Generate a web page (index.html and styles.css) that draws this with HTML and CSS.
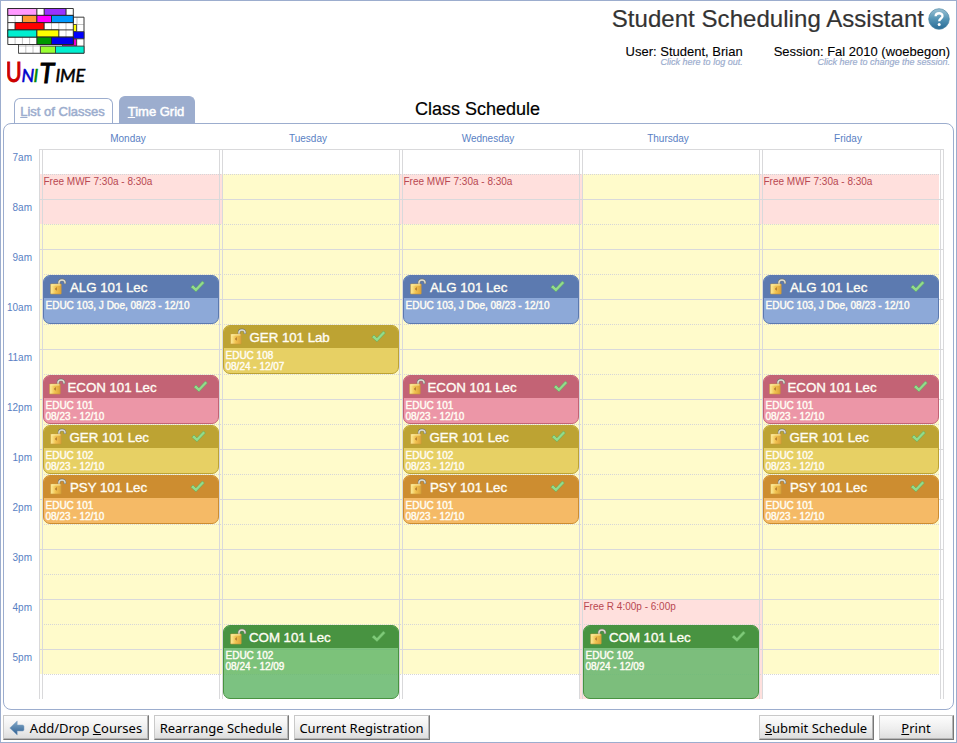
FILE: index.html
```html
<!DOCTYPE html>
<html lang="en">
<head>
<meta charset="utf-8">
<title>Student Scheduling Assistant</title>
<link rel="stylesheet" href="styles.css">
</head>
<body>
<svg width="0" height="0" class="defs" aria-hidden="true">
  <defs>
    <linearGradient id="gold" x1="0" x2="1" y1="0" y2="0"><stop offset="0" stop-color="#fff0a0"/><stop offset=".45" stop-color="#f2c452"/><stop offset="1" stop-color="#dda33a"/></linearGradient>
    <linearGradient id="blue" x1="0" x2="0" y1="0" y2="1"><stop offset="0" stop-color="#9cc3d5"/><stop offset=".5" stop-color="#5494b5"/><stop offset="1" stop-color="#286b96"/></linearGradient>
    <linearGradient id="arrowfill" x1="0" x2="0" y1="0" y2="1"><stop offset="0" stop-color="#84abc9"/><stop offset="1" stop-color="#2d5e91"/></linearGradient>
    <symbol id="lock" viewBox="0 0 17 17"><path d="M9 7V4.6C9 0.8 15 0.8 15 4.5V6" fill="none" stroke="#77786c" stroke-width="2.5"/><path d="M9 7V4.6C9 1 15 1 15 4.5V5.6" fill="none" stroke="#ddddd2" stroke-width="1.5"/><rect x=".6" y="6" width="10.6" height="10" rx=".6" fill="url(#gold)" stroke="#c9983a" stroke-width=".6"/><path d="M1.4 6.9h9" stroke="#fff2a8"/><path d="M6.8 9v3.8L4.8 11z" fill="#ae7430"/></symbol>
    <symbol id="check" viewBox="0 0 15 13"><path d="M.8 7.2L3 5L5.9 7.9L12.4 1L14.4 3L6 11.8z" fill="#92dc8b" stroke="#5ba65a" stroke-width=".5"/></symbol>
  </defs>
</svg>
<div class="page">
  <header class="header">
    <svg class="logo" width="80" height="80" viewBox="7 7 80 80">
      <g stroke="#aaa" stroke-width=".7" fill="#fff">
        <path d="M18.5 17.2H84V53.3H18.5z"/><path d="M25.8 17v36M33 17v36M77 17v36M40 45v8M18 24.5h66M18 32h66M18 39h66M18 46h66" fill="none"/>
      </g>
      <g stroke="#333" stroke-width=".8">
        <path d="M18.5 17.2H84V53.3H18.5z" fill="none"/>
        <path d="M70 24.5h6.5v7H70z" fill="#ff0"/><path d="M73 31.7h11v7H73z" fill="#00f"/><path d="M62.5 39h14v7h-14z" fill="#e0c"/><path d="M40.5 46.2h15v7h-15z" fill="#9f3"/><path d="M55.5 46.2H84v7H55.5z" fill="#00efd0"/>
      </g>
      <path d="M7.8 8.5h65.5v36H7.8z" fill="#fff"/>
      <path d="M15.1 8.5v36M22.4 8.5v36M29.6 8.5v36M36.9 8.5v36M44.2 8.5v36M51.5 8.5v36M58.8 8.5v36M66 8.5v36" stroke="#aaa" stroke-width=".7"/>
      <g stroke="#222" stroke-width=".9">
        <path d="M7.8 8.5h65.5v36H7.8z" fill="none"/><path d="M7.8 15.4h65.5M7.8 22.6h65.5M7.8 29.9h65.5M7.8 37.1h65.5"/>
        <path d="M7.8 8.5h29v6.9h-29z" fill="#f9f"/><path d="M44.2 8.5h21.8v6.9H44.2z" fill="#93f"/>
        <path d="M22.4 15.4h14.5v7.2H22.4z" fill="#f93"/><path d="M36.9 15.4h14.6v7.2H36.9z" fill="#f0f"/><path d="M51.5 15.4h21.8v7.2H51.5z" fill="#09f"/>
        <path d="M15.1 22.6h29v7.3h-29z" fill="#f00"/><path d="M7.8 29.9h29.1v7.2H7.8z" fill="#00efd0"/><path d="M36.9 29.9h21.9v7.2H36.9z" fill="#ff0"/>
        <path d="M36.9 37.1h14.6v7.4H36.9z" fill="#090"/><path d="M51.5 37.1h21.8v7.4H51.5z" fill="#00e"/>
      </g>
      <text class="word" y="82.8"><tspan class="big" x="5.8" y="82.3" fill="#c00" stroke="#c00" textLength="16" lengthAdjust="spacingAndGlyphs">U</tspan><tspan x="21.5" fill="#00c" stroke="#00c">N</tspan><tspan x="33.5" fill="#080" stroke="#080">I</tspan><tspan class="big tee" x="39.5" y="82.5">T</tspan><tspan x="55.5" y="82">I</tspan><tspan x="60" y="82">M</tspan><tspan x="75.5" y="81.5">E</tspan></text>
    </svg>
    <div class="heading">
      <div class="title">Student Scheduling Assistant
        <svg width="22" height="22" viewBox="0 0 22 22"><circle cx="11" cy="11" r="10.3" fill="url(#blue)" stroke="#4d87a5" stroke-width=".7"/><path d="M7.6 8.3C7.8 4.2 14.6 4.3 14.5 8.2C14.4 10.4 11.2 10.7 11.2 13.3" fill="none" stroke="#fff" stroke-width="2.3"/><circle cx="11.2" cy="16.4" r="1.5" fill="#fff"/></svg>
      </div>
      <div class="infos">
        <div class="info">User: Student, Brian<span class="hint">Click here to log out.</span></div>
        <div class="info">Session: Fal 2010 (woebegon)<span class="hint">Click here to change the session.</span></div>
      </div>
    </div>
  </header>
  <nav class="tabs">
    <div class="tab"><u>L</u>ist of Classes</div>
    <div class="tab active"><u>T</u>ime Grid</div>
    <div class="caption">Class Schedule</div>
  </nav>
  <main class="panel">
    <div class="days"><span>Monday</span><span>Tuesday</span><span>Wednesday</span><span>Thursday</span><span>Friday</span></div>
    <div class="body">
      <div class="hours"><span>7am</span><span>8am</span><span>9am</span><span>10am</span><span>11am</span><span>12pm</span><span>1pm</span><span>2pm</span><span>3pm</span><span>4pm</span><span>5pm</span></div>
      <div class="timegrid">
        <div class="layer available"></div>
        <div class="layer week" id="free"></div>
        <div class="layer lines" id="lines"></div>
        <div class="layer verticals"></div>
        <div class="layer week" id="week"></div>
      </div>
    </div>
  </main>
  <footer class="buttons">
    <button class="b-add"><svg width="16" height="16" viewBox="0 0 16 16"><path d="M.8 8L8.2 1V5H13.5Q15 5 15 6.5V9.5Q15 11 13.5 11H8.2V15z" fill="url(#arrowfill)" stroke="#7d9fc0" stroke-width=".5"/></svg><span>Add/Drop <u>C</u>ourses</span></button>
    <button class="b-re">Rearrange Schedule</button>
    <button class="b-cur">Current Registration</button>
    <button class="b-sub"><span><u>S</u>ubmit Schedule</span></button>
    <button class="b-print"><span><u>P</u>rint</span></button>
  </footer>
</div>
<script src="grid.js"></script>
</body>
</html>
```
FILE: styles.css
```css
* { box-sizing: border-box; }
body { margin: 0; background: #fff; font-family: "Liberation Sans", Arial, sans-serif; color: #000; }
.defs { display: block; height: 0; }
.page { width: 957px; height: 743px; border: 1px solid #9cadce; display: flex; flex-direction: column; overflow: hidden; }
.header { height: 95px; display: flex; justify-content: space-between; padding: 6px 6px 0; flex: none; }
.word { font-family: Lato, sans-serif; font-style: italic; font-size: 18px; font-weight: 400; stroke: #000; stroke-width: .5px; }
.word .big { font-size: 26px; font-style: normal; stroke-width: 1px; }
.word .tee { font-style: italic; font-size: 27px; }
.heading { display: flex; flex-direction: column; align-items: flex-end; }
.title { display: flex; align-items: center; gap: 4px; font-size: 24px; line-height: 24px; height: 24px; color: #333; white-space: nowrap; letter-spacing: .05px; -webkit-text-stroke: .2px #333; }
.infos { display: flex; gap: 31px; margin-top: 13px; }
.info { font-size: 13px; line-height: 15px; text-align: right; -webkit-text-stroke: .1px #000; }
.hint { display: block; font-size: 9px; line-height: 6px; font-style: italic; color: #9cadce; -webkit-text-stroke: .2px #9cadce; }
.tabs { height: 27px; display: flex; align-items: flex-end; padding-left: 13px; flex: none; }
.tab { height: 25px; width: 99px; border: 1px solid #9cadce; border-bottom: 0; border-radius: 6px 6px 0 0; color: #9cadce; font-size: 13px; line-height: 26px; text-align: center; margin-right: 6px; padding-right: 2px; white-space: nowrap; -webkit-text-stroke: .5px currentColor; }
.tab.active { height: 27px; width: 76px; background: #9cadce; color: #fff; line-height: 30px; }
.caption { font-size: 18px; line-height: 20px; margin: 0 0 4px 214px; -webkit-text-stroke: .2px #000; }
.panel { height: 587px; margin: 0 2px; border: 1px solid #9cadce; border-radius: 8px; flex: none; }
.days { height: 25px; display: grid; grid-template-columns: repeat(5, 180px); padding-left: 34px; font-size: 10px; line-height: 29px; text-align: center; color: #5a7fc4; }
.body { display: flex; height: 550px; }
.hours { width: 35px; display: flex; flex-direction: column; font-size: 10px; color: #5a7fc4; text-align: right; padding-right: 7px; flex: none; }
.hours span { height: 50px; line-height: 17px; }
.timegrid { width: 905px; height: 550px; display: grid; }
.layer { grid-area: 1 / 1; }
.available { background: #fffbcb; margin: 25px 5px 25px 1px; }
.week { display: grid; grid-template-columns: repeat(5, 180px); padding-left: 3px; }
.day { display: grid; grid-template-rows: repeat(22, 25px); grid-template-columns: 176px; padding-left: 1px; }
.free { grid-column: 1; background: #ffe0dd; color: #b84851; font-size: 10px; line-height: 16px; margin: 0 -3px 0 -3px; padding-left: 3.5px; white-space: nowrap; }
.free.last { margin-right: 0; }
.lines { display: grid; grid-template-rows: repeat(22, 25px); }
.hour { border-top: 1px solid #d9d9db; }
.half { height: 1px; margin: 0 2px 0 3px; background: repeating-linear-gradient(90deg, #d6d6d8 0 1px, transparent 1px 2px); }
.verticals { display: grid; grid-template-columns: repeat(5, 180px) 5px; }
.pair { width: 4px; border: 1px solid #d9d9db; border-width: 0 1px; }
.pair:last-child { margin-left: 1px; }
.event { grid-column: 1; margin-top: 1px; border: 1px solid var(--edge); border-radius: 7px; overflow: hidden; background: var(--fill); color: #fffdf4; }
.bar { height: 22px; display: flex; align-items: center; background: var(--head); padding-left: var(--x); font-size: 13.333px; letter-spacing: -.05px; white-space: nowrap; -webkit-text-stroke: .35px #fffdf4; }
.bar .lock { margin: -1px var(--gap) 0 0; flex: none; }
.bar .name { line-height: 22px; padding-top: 1px; }
.bar .check { margin: -2px var(--r) 0 auto; flex: none; }
.info-lines { font-size: 10px; line-height: 11px; padding: 2px 0 0 1.5px; white-space: nowrap; -webkit-text-stroke: .4px #fffdf4; }
.alg { --edge: #5c7ab0; --head: #5c7ab0; --fill: rgba(135,164,216,.95); --x: 6px; --gap: 3px; --r: 13px; }
.econ { --edge: #c36375; --head: #c36375; --fill: rgba(235,147,165,.97); --x: 5px; --gap: 1.5px; --r: 10px; }
.ger { --edge: #bda333; --head: #bda333; --fill: rgba(230,206,96,.97); --x: 6px; --gap: 2.5px; --r: 12px; }
.psy { --edge: #cd8d30; --head: #cd8d30; --fill: rgba(245,184,98,.97); --x: 6px; --gap: 3px; --r: 13px; }
.com { --edge: #489341; --head: #489341; --fill: rgba(103,184,108,.86); --x: 6px; --gap: 2px; --r: 12px; }
.com .check { opacity: .75; }
.buttons { display: flex; gap: 5px; padding: 5px 2px 0; flex: none; }
.buttons button { height: 25px; padding: 0; border: 1px solid; border-color: #c9c9c9 #777 #777 #c9c9c9; box-shadow: inset -1px -1px #b5b5b5; background: linear-gradient(#fdfdfd, #eee 55%, #dcdcdc); font: 13px "Noto Sans", sans-serif; color: #000; display: flex; align-items: center; justify-content: center; gap: 5px; padding-right: 1px; white-space: nowrap; }
.buttons .b-add { width: 146px; }
.buttons .b-re { width: 135px; }
.buttons .b-cur { width: 136px; }
.buttons .b-sub { width: 115px; margin-left: auto; }
.buttons .b-print { width: 75px; }
```
FILE: grid.js
```js
// Rows are half-hour slots counted from 7:00am.
const sections = {
  alg: { name: 'ALG 101 Lec', row: 6, span: 2, lines: ['EDUC 103, J Doe, 08/23 - 12/10'] },
  econ: { name: 'ECON 101 Lec', row: 10, span: 2, lines: ['EDUC 101', '08/23 - 12/10'] },
  ger: { name: 'GER 101 Lec', row: 12, span: 2, lines: ['EDUC 102', '08/23 - 12/10'] },
  psy: { name: 'PSY 101 Lec', row: 14, span: 2, lines: ['EDUC 101', '08/23 - 12/10'] },
  lab: { cls: 'ger', name: 'GER 101 Lab', row: 8, span: 2, lines: ['EDUC 108', '08/24 - 12/07'] },
  com: { name: 'COM 101 Lec', row: 20, span: 3, lines: ['EDUC 102', '08/24 - 12/09'] }
};
const mwf = ['alg', 'econ', 'ger', 'psy'];
const days = [mwf, ['lab', 'com'], mwf, ['com'], mwf];
const freeMwf = { row: 2, span: 2, text: 'Free MWF 7:30a - 8:30a' };
const free = [freeMwf, null, freeMwf, { row: 19, span: 4, text: 'Free R 4:00p - 6:00p' }, freeMwf];

document.getElementById('free').innerHTML = free.map((f, i) =>
  `<div class="day">${f ? `<div class="free${i === 4 ? ' last' : ''}" style="grid-row:${f.row} / span ${f.span}">${f.text}</div>` : ''}</div>`).join('');
document.getElementById('lines').innerHTML = Array.from({ length: 22 }, (_, i) =>
  `<div class="${i % 2 ? 'half' : 'hour'}"></div>`).join('');
document.querySelector('.verticals').innerHTML = '<div class="pair"></div>'.repeat(6);
document.getElementById('week').innerHTML = days.map(list => '<div class="day">' + list.map(key => {
  const s = sections[key];
  return `<div class="event ${s.cls || key}" style="grid-row:${s.row} / span ${s.span}">
    <div class="bar"><svg class="lock" width="17" height="17"><use href="#lock"/></svg><span class="name">${s.name}</span><svg class="check" width="15" height="13"><use href="#check"/></svg></div>
    <div class="info-lines">${s.lines.join('<br>')}</div></div>`;
}).join('') + '</div>').join('');
```
